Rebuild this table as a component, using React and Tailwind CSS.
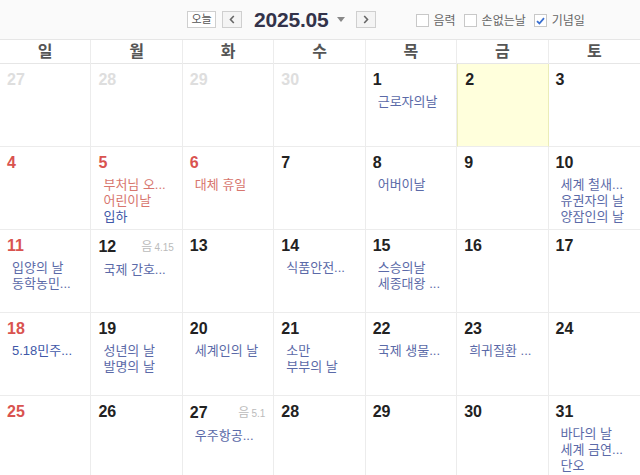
import React from "react";

const FONT = { fontFamily: '"Liberation Sans", "Noto Sans CJK KR", sans-serif' };

const B = "text-[#5b6aa8]"; // event blue
const D = "text-[#3f58a8]"; // darker blue
const R = "text-[#d7766e]"; // red event

const weeks = [
  [
    { d: 27, o: true }, { d: 28, o: true }, { d: 29, o: true }, { d: 30, o: true },
    { d: 1, ev: [["근로자의날", B]] },
    { d: 2, today: true },
    { d: 3 },
  ],
  [
    { d: 4, red: true },
    { d: 5, red: true, ev: [["부처님 오...", R], ["어린이날", R], ["입하", D]] },
    { d: 6, red: true, ev: [["대체 휴일", R]] },
    { d: 7 },
    { d: 8, ev: [["어버이날", B]] },
    { d: 9 },
    { d: 10, ev: [["세계 철새...", B], ["유권자의 날", B], ["양잠인의 날", B]] },
  ],
  [
    { d: 11, red: true, ev: [["입양의 날", B], ["동학농민...", B]] },
    { d: 12, lunar: "4.15", ev: [["국제 간호...", B]] },
    { d: 13 },
    { d: 14, ev: [["식품안전...", B]] },
    { d: 15, ev: [["스승의날", B], ["세종대왕 ...", B]] },
    { d: 16 },
    { d: 17 },
  ],
  [
    { d: 18, red: true, ev: [["5.18민주...", D]] },
    { d: 19, ev: [["성년의 날", B], ["발명의 날", B]] },
    { d: 20, ev: [["세계인의 날", B]] },
    { d: 21, ev: [["소만", B], ["부부의 날", B]] },
    { d: 22, ev: [["국제 생물...", B]] },
    { d: 23, ev: [["희귀질환 ...", B]] },
    { d: 24 },
  ],
  [
    { d: 25, red: true },
    { d: 26 },
    { d: 27, lunar: "5.1", ev: [["우주항공...", B]] },
    { d: 28 },
    { d: 29 },
    { d: 30 },
    { d: 31, ev: [["바다의 날", B], ["세계 금연...", B], ["단오", B]] },
  ],
];

const days = ["일", "월", "화", "수", "목", "금", "토"];

function Checkbox({ checked, label }) {
  return (
    <div className="flex items-center gap-[5px]">
      <div className="w-[13px] h-[13px] border border-[#c8c8c8] bg-white flex items-center justify-center">
        {checked && (
          <svg width="9" height="8" viewBox="0 0 9 8">
            <path d="M1 4.2 L3.4 6.5 L8 1.2" fill="none" stroke="#3a6fd0" strokeWidth="1.8" />
          </svg>
        )}
      </div>
      <span className="text-[12px] text-[#666] leading-[14px]">{label}</span>
    </div>
  );
}

function Cell({ c, col }) {
  const numColor = c.o ? "text-[#dedede]" : c.red ? "text-[#d9534f]" : "text-[#222]";
  return (
    <div
      className={`h-[83px] border-b border-[#ececec] ${col < 6 ? "border-r" : ""} ${
        c.today ? "bg-[#ffffdc] border-l border-l-[#ebedb8] border-r-[#ebedb8]" : "bg-white"
      } pt-[6px] overflow-hidden`}
    >
      <div className="flex items-center justify-between px-[7px] pr-[8px]">
        <span className={`text-[16px] leading-[20px] font-bold ${numColor}`}>{c.d}</span>
        {c.lunar && (
          <span className="text-[#bbb] leading-[20px]">
            <span className="text-[12px]">음</span>
            <span className="text-[10px] ml-[2px]">{c.lunar}</span>
          </span>
        )}
      </div>
      <div className="mt-[4px] pl-[12px] pr-[2px]">
        {(c.ev || []).map(([t, cls], i) => (
          <div key={i} className={`text-[13px] leading-[16px] whitespace-nowrap overflow-hidden ${cls}`}>
            {t}
          </div>
        ))}
      </div>
    </div>
  );
}

export default function App() {
  return (
    <div className="w-[640px] h-[475px] overflow-hidden bg-white" style={FONT}>
      <div className="h-[40px] bg-[#fafafa] border-b border-[#e6e6e6] flex items-center">
        <div className="flex items-center ml-[187px]">
          <div className="w-[29px] h-[17px] border border-[#cfcfcf] bg-white flex items-center justify-center text-[11px] text-[#555] leading-none">
            오늘
          </div>
          <div className="ml-[6px] w-[20px] h-[17px] border border-[#cfcfcf] bg-[#f4f4f4] flex items-center justify-center">
            <svg width="6" height="9" viewBox="0 0 6 9">
              <path d="M4.8 1 L1.5 4.5 L4.8 8" fill="none" stroke="#666" strokeWidth="1.6" />
            </svg>
          </div>
          <span className="ml-[12px] text-[21px] font-bold text-[#33334a] leading-none tracking-[-0.2px]">2025.05</span>
          <svg className="ml-[8px]" width="8" height="5" viewBox="0 0 8 5">
            <path d="M0 0 L8 0 L4 5 Z" fill="#888" />
          </svg>
          <div className="ml-[11px] w-[20px] h-[17px] border border-[#cfcfcf] bg-[#f4f4f4] flex items-center justify-center">
            <svg width="6" height="9" viewBox="0 0 6 9">
              <path d="M1.2 1 L4.5 4.5 L1.2 8" fill="none" stroke="#666" strokeWidth="1.6" />
            </svg>
          </div>
        </div>
        <div className="flex items-center ml-[40px] gap-[8px] mt-[2px]">
          <Checkbox label="음력" />
          <Checkbox label="손없는날" />
          <Checkbox checked label="기념일" />
        </div>
      </div>
      <div className="grid grid-cols-7 h-[24px] border-b border-[#e6e6e6] bg-white">
        {days.map((d, i) => (
          <div
            key={d}
            className={`flex items-center justify-center text-[16px] font-bold text-[#555] ${i < 6 ? "border-r border-[#ececec]" : ""}`}
          >
            {d}
          </div>
        ))}
      </div>
      <div className="grid grid-cols-7">
        {weeks.flatMap((w, wi) => w.map((c, ci) => <Cell key={`${wi}-${ci}`} c={c} col={ci} />))}
      </div>
    </div>
  );
}
